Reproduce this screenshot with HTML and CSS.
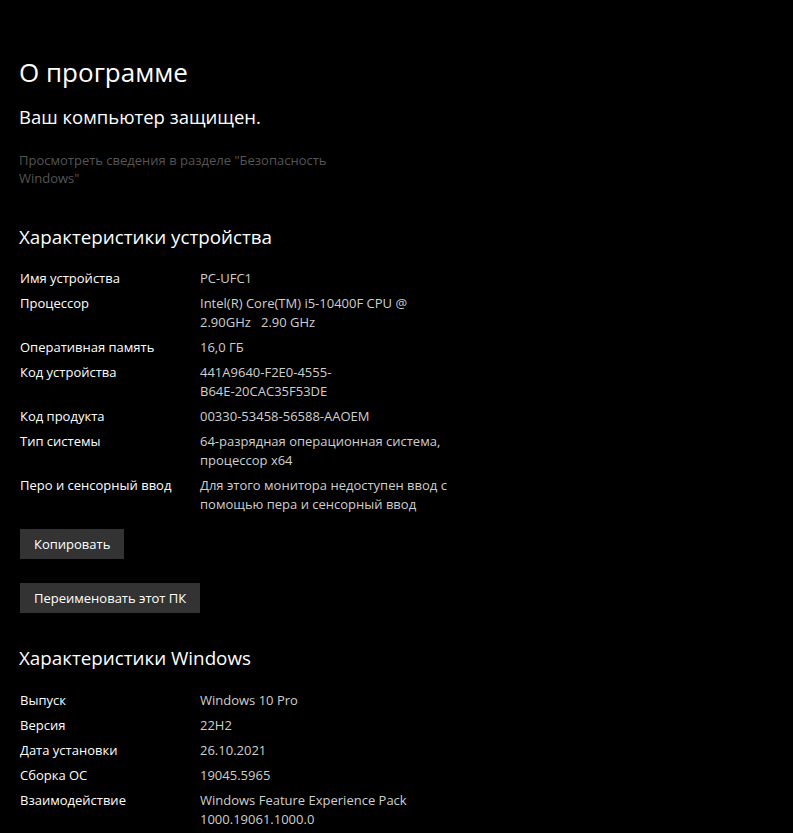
FILE: index.html
```html
<!DOCTYPE html>
<html lang="ru">
<head>
    <meta charset="UTF-8">
    <title>О программе</title>
    <link rel="stylesheet" href="styles.css">
</head>
<body>
    <div class="about-page">
        <h1 class="page-title">О программе</h1>
        <div class="status">Ваш компьютер защищен.</div>
        <div class="security-link">Просмотреть сведения в разделе "Безопасность<br>Windows"</div>

        <h2 class="section-title">Характеристики устройства</h2>
        <div class="spec-list">
            <div class="spec-row"><div class="spec-label">Имя устройства</div><div class="spec-value">PC-UFC1</div></div>
            <div class="spec-row"><div class="spec-label">Процессор</div><div class="spec-value">Intel(R) Core(TM) i5-10400F CPU @<br>2.90GHz&nbsp;&nbsp; 2.90 GHz</div></div>
            <div class="spec-row"><div class="spec-label">Оперативная память</div><div class="spec-value">16,0 ГБ</div></div>
            <div class="spec-row"><div class="spec-label">Код устройства</div><div class="spec-value">441A9640-F2E0-4555-<br>B64E-20CAC35F53DE</div></div>
            <div class="spec-row"><div class="spec-label">Код продукта</div><div class="spec-value">00330-53458-56588-AAOEM</div></div>
            <div class="spec-row"><div class="spec-label">Тип системы</div><div class="spec-value">64-разрядная операционная система,<br>процессор x64</div></div>
            <div class="spec-row"><div class="spec-label">Перо и сенсорный ввод</div><div class="spec-value">Для этого монитора недоступен ввод с<br>помощью пера и сенсорный ввод</div></div>
        </div>

        <div class="actions">
            <button class="win-button">Копировать</button>
            <button class="win-button">Переименовать этот ПК</button>
        </div>

        <h2 class="section-title">Характеристики Windows</h2>
        <div class="spec-list">
            <div class="spec-row"><div class="spec-label">Выпуск</div><div class="spec-value">Windows 10 Pro</div></div>
            <div class="spec-row"><div class="spec-label">Версия</div><div class="spec-value">22H2</div></div>
            <div class="spec-row"><div class="spec-label">Дата установки</div><div class="spec-value">26.10.2021</div></div>
            <div class="spec-row"><div class="spec-label">Сборка ОС</div><div class="spec-value">19045.5965</div></div>
            <div class="spec-row"><div class="spec-label">Взаимодействие</div><div class="spec-value">Windows Feature Experience Pack<br>1000.19061.1000.0</div></div>
        </div>
    </div>
</body>
</html>
```

FILE: styles.css
```css
body {
    margin: 0;
    padding: 0;
    background-color: #000;
    color: #fff;
    font-family: 'Open Sans', 'Noto Sans', sans-serif;
    overflow: hidden;
}

.about-page {
    padding: 52px 20px 0 19px;
}

.page-title {
    margin: 0;
    font-size: 26px;
    font-weight: 400;
    line-height: 40px;
}

.status {
    margin-top: 11px;
    font-size: 18.5px;
    line-height: 28px;
}

.security-link {
    margin-top: 20px;
    font-size: 13px;
    line-height: 18px;
    color: #555;
}

.section-title {
    margin: 36px 0 0;
    font-size: 18.8px;
    font-weight: 400;
    line-height: 28px;
}

.spec-list {
    margin-top: 18px;
    padding-left: 1px;
    display: flex;
    flex-direction: column;
    gap: 6px;
}

.spec-row {
    display: flex;
    font-size: 13px;
    line-height: 19px;
}

.spec-label {
    width: 180px;
    flex-shrink: 0;
}

.spec-value {
    color: #cfcfcf;
}

.actions {
    margin-top: 15px;
    padding-left: 1px;
    display: flex;
    flex-direction: column;
    align-items: flex-start;
    gap: 24px;
}

.win-button {
    background-color: #333;
    color: #fff;
    border: none;
    height: 30px;
    padding: 0 14px;
    font-family: inherit;
    font-size: 13px;
}

.actions + .section-title {
    margin-top: 31px;
}

.actions + .section-title + .spec-list {
    margin-top: 19px;
}
```
